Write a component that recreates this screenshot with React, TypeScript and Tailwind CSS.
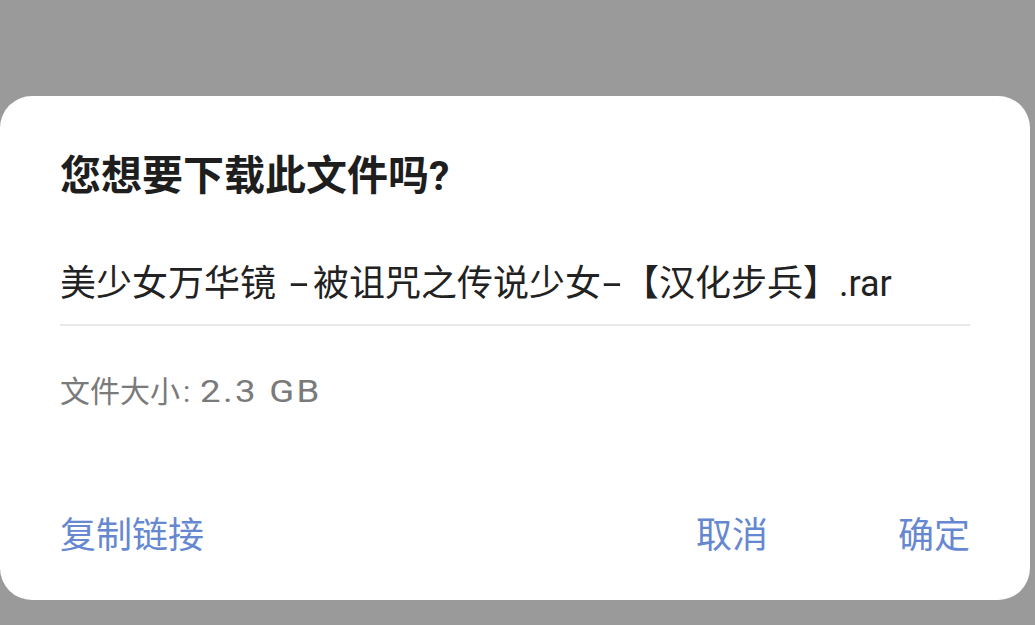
export default function App() {
  return (
    <div
      className="h-[625px] w-full overflow-hidden bg-[#9a9a9a] pt-[96px]"
      style={{ fontFamily: 'Roboto, "Noto Sans CJK SC", sans-serif' }}
    >
      <div className="flex h-[504px] w-[1030px] flex-col rounded-[32px] bg-white px-[60px]">
        <h1 className="pt-[56px] text-[41px] leading-[48px] font-bold text-[#1e1e1e]">
          您想要下载此文件吗?
        </h1>

        <div className="mt-[62px] border-b-2 border-[#e8e8e8] pb-[18px]">
          <p className="text-[36px] leading-[44px] text-[#222]">
            美少女万华镜 <span className="inline-block w-[28px] scale-x-[1.9] text-center">-</span>被诅咒之传说少女
            <span className="inline-block w-[22px] scale-x-[1.9] text-center">-</span>【汉化步兵】.rar
          </p>
        </div>

        <p className="mt-[48px] text-[30px] leading-[36px] text-[#7a7a7a]">
          文件大小<span className="pl-[3px] pr-[10px]">:</span>
          <span className="inline-block origin-left scale-x-[1.18] text-[31px] tracking-[2px]">2.3 GB</span>
        </p>

        <div className="mt-auto mb-[42px] flex items-center text-[36px] leading-[44px] text-[#6688d0]">
          <button className="cursor-pointer">复制链接</button>
          <div className="ml-auto flex gap-[130px]">
            <button className="cursor-pointer">取消</button>
            <button className="cursor-pointer">确定</button>
          </div>
        </div>
      </div>
    </div>
  )
}
